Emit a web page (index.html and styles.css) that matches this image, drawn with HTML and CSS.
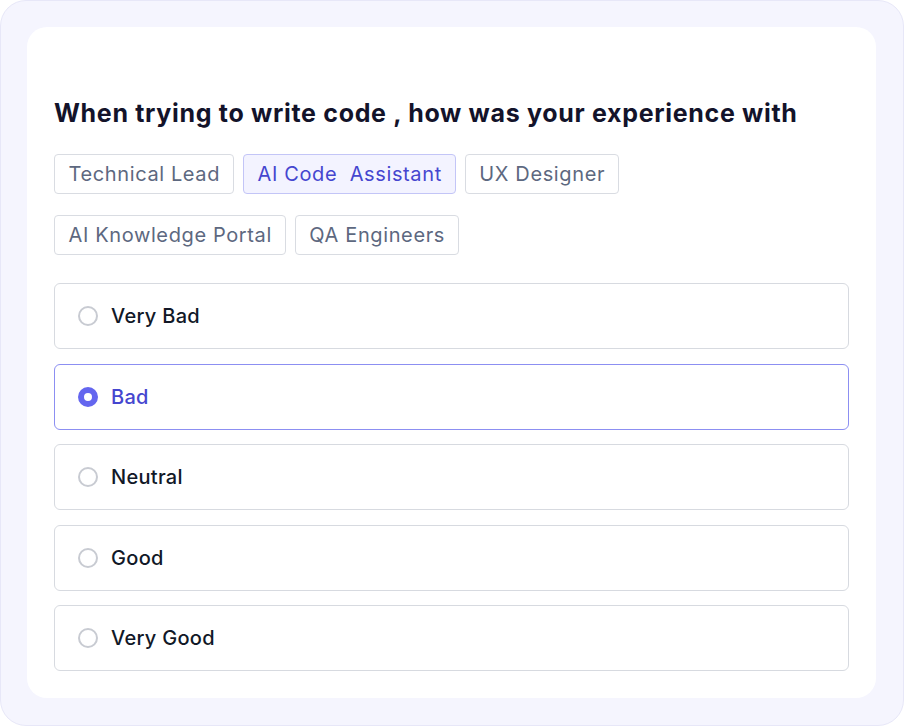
FILE: index.html
```html
<!DOCTYPE html>
<html>
<head>
<meta charset="utf-8">
<link rel="stylesheet" href="styles.css">
</head>
<body>
<div class="frame">
  <div class="card">
    <h1 class="title">When trying to write code , how was your experience with</h1>
    <div class="chips">
      <span class="chip">Technical Lead</span>
      <span class="chip chip-active">AI Code&nbsp; Assistant</span>
      <span class="chip">UX Designer</span>
      <span class="chip">AI Knowledge Portal</span>
      <span class="chip">QA Engineers</span>
    </div>
    <div class="options">
      <div class="option"><span class="radio"></span><span class="label">Very Bad</span></div>
      <div class="option option-active"><span class="radio"></span><span class="label">Bad</span></div>
      <div class="option"><span class="radio"></span><span class="label">Neutral</span></div>
      <div class="option"><span class="radio"></span><span class="label">Good</span></div>
      <div class="option"><span class="radio"></span><span class="label">Very Good</span></div>
    </div>
  </div>
</div>
</body>
</html>
```
FILE: styles.css
```css
* { box-sizing: border-box; }
html, body { margin: 0; padding: 0; background: #ffffff; }
body { font-family: Inter, "Noto Sans", sans-serif; }
.frame {
  width: 904px;
  height: 726px;
  background: #f5f5fe;
  border: 1px solid #e7e7f8;
  border-radius: 26px;
  padding: 26px 27px 27px 26px;
}
.card {
  background: #ffffff;
  border-radius: 20px;
  height: 100%;
  padding: 70px 27px 0 27px;
}
.title {
  margin: 0;
  font-size: 25px;
  line-height: 32px;
  font-weight: 700;
  color: #13132a;
  letter-spacing: 0.68px;
}
.chips {
  display: flex;
  flex-wrap: wrap;
  gap: 21px 9px;
  width: 600px;
  margin-top: 25px;
}
.chip {
  display: inline-flex;
  align-items: center;
  height: 40px;
  padding: 0 13px 0 13.5px;
  border: 1.5px solid #d9dce2;
  border-radius: 4px;
  font-size: 20px;
  letter-spacing: 0.62px;
  color: #5d6880;
  white-space: nowrap;
}
.chip-active {
  background: #f3f3ff;
  border-color: #c3c5f7;
  color: #4546cf;
}
.options {
  display: flex;
  flex-direction: column;
  gap: 14.5px;
  margin-top: 28px;
}
.option {
  display: flex;
  align-items: center;
  height: 66px;
  padding-left: 23px;
  border: 1.5px solid #d7dae0;
  border-radius: 6px;
}
.radio {
  width: 20px;
  height: 20px;
  border-radius: 50%;
  border: 2px solid #c8cbd2;
  flex: none;
}
.label {
  margin-left: 13px;
  font-size: 20px;
  font-weight: 500;
  letter-spacing: 0.3px;
  color: #111827;
}
.option-active {
  border-color: #8c8ff2;
}
.option-active .radio {
  border: 6px solid #6466ef;
  background: #ffffff;
}
.option-active .label {
  color: #4546cf;
}
```
